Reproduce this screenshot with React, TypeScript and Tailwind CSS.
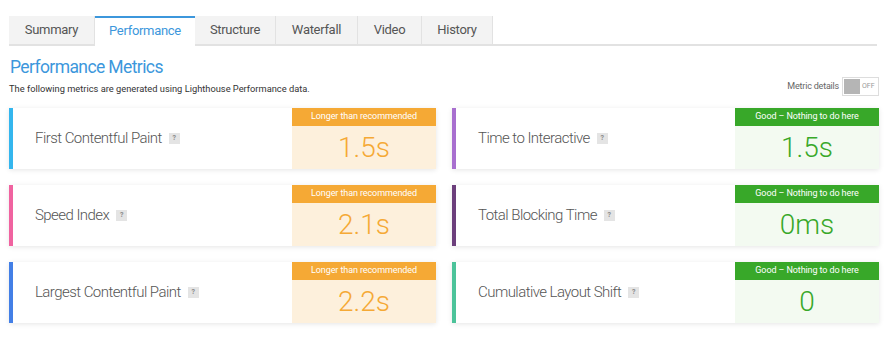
const tabs = ["Summary", "Performance", "Structure", "Waterfall", "Video", "History"];

type Metric = {
  label: string;
  value: string;
  bar: string;
  good: boolean;
};

const metrics: Metric[] = [
  { label: "First Contentful Paint", value: "1.5s", bar: "bg-[#34b6ee]", good: false },
  { label: "Time to Interactive", value: "1.5s", bar: "bg-[#a86fcf]", good: true },
  { label: "Speed Index", value: "2.1s", bar: "bg-[#f063a0]", good: false },
  { label: "Total Blocking Time", value: "0ms", bar: "bg-[#6c3f7c]", good: true },
  { label: "Largest Contentful Paint", value: "2.2s", bar: "bg-[#437fe6]", good: false },
  { label: "Cumulative Layout Shift", value: "0", bar: "bg-[#4cc39a]", good: true },
];

function MetricCard({ m }: { m: Metric }) {
  return (
    <div className="flex h-[61px] bg-white shadow-[0_1px_5px_rgba(0,0,0,0.1)]">
      <div className={`w-[4px] shrink-0 ${m.bar}`} />
      <div className="flex flex-1 items-center pl-[22px] text-[15px] font-light tracking-[-0.55px] text-[#555]">
        <span>{m.label}</span>
        <span className="ml-[7px] flex h-[11px] w-[11px] items-center justify-center bg-[#e4e4e4] text-[7px] font-bold tracking-normal text-[#888]">
          ?
        </span>
      </div>
      <div className="flex w-[144px] shrink-0 flex-col">
        <div
          className={`flex h-[21px] items-center justify-center text-[9px] tracking-[-0.1px] text-white ${
            m.good ? "bg-[#38a829]" : "bg-[#f5a935]"
          }`}
        >
          {m.good ? "Good – Nothing to do here" : "Longer than recommended"}
        </div>
        <div
          className={`flex flex-1 items-center justify-center pt-[1px] text-[28px] font-light ${
            m.good ? "bg-[#f3faf1] text-[#38a829]" : "bg-[#fdf0dc] text-[#f5a935]"
          }`}
        >
          {m.value}
        </div>
      </div>
    </div>
  );
}

export default function App() {
  return (
    <div className="h-[340px] w-[888px] bg-white px-[9px] pt-[16px] font-['Roboto',sans-serif] text-[#333]">
      <div className="flex w-[868px] border-b-2 border-[#e2e2e2]">
        {tabs.map((t) =>
          t === "Performance" ? (
            <div
              key={t}
              className="-mb-[2px] flex h-[30px] w-[100px] items-center justify-center border-t-2 border-[#3c97dc] bg-white pb-[2px] text-[13px] tracking-[-0.3px] text-[#3c97dc]"
            >
              {t}
            </div>
          ) : (
            <div
              key={t}
              className={`flex h-[28px] items-center justify-center border-r border-[#e2e2e2] bg-[#f3f3f3] text-[13px] tracking-[-0.3px] text-[#555] ${
                t === "Summary"
                  ? "w-[86px]"
                  : t === "Structure"
                  ? "w-[81px]"
                  : t === "Waterfall"
                  ? "w-[82px]"
                  : t === "Video"
                  ? "w-[64px]"
                  : "w-[71px]"
              }`}
            >
              {t}
            </div>
          )
        )}
      </div>

      <h2 className="mt-[9px] pl-[1px] text-[17.5px] leading-[24px] tracking-[-0.6px] text-[#3c97dc]">
        Performance Metrics
      </h2>

      <div className="flex items-end justify-between">
        <p className="pt-[3px] text-[9.3px] leading-[14px] text-[#333]">
          The following metrics are generated using Lighthouse Performance data.
        </p>
        <div className="-mt-[8px] flex items-center gap-[3px]">
          <span className="text-[9px] tracking-[-0.2px] text-[#666]">Metric details</span>
          <div className="flex h-[19px] w-[37px] items-center border border-[#ddd] bg-white px-[1px]">
            <div className="h-[15px] w-[16px] bg-[#b5b5b5]" />
            <span className="ml-[2px] text-[7px] text-[#999]">OFF</span>
          </div>
        </div>
      </div>

      <div className="mt-[12px] grid grid-cols-2 gap-x-[16px] gap-y-[16px]">
        {metrics.map((m) => (
          <MetricCard key={m.label} m={m} />
        ))}
      </div>

      <div className="mt-[17px] border-t border-[#e6e6e6]" />
    </div>
  );
}
